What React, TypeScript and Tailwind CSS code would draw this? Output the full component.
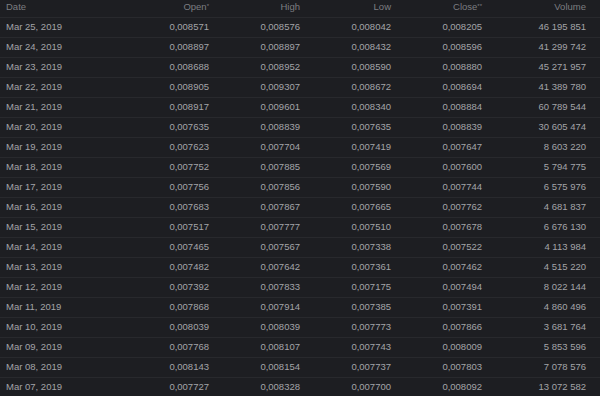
const rows: [string, string, string, string, string, string][] = [
  ["Mar 25, 2019", "0,008571", "0,008576", "0,008042", "0,008205", "46 195 851"],
  ["Mar 24, 2019", "0,008897", "0,008897", "0,008432", "0,008596", "41 299 742"],
  ["Mar 23, 2019", "0,008688", "0,008952", "0,008590", "0,008880", "45 271 957"],
  ["Mar 22, 2019", "0,008905", "0,009307", "0,008672", "0,008694", "41 389 780"],
  ["Mar 21, 2019", "0,008917", "0,009601", "0,008340", "0,008884", "60 789 544"],
  ["Mar 20, 2019", "0,007635", "0,008839", "0,007635", "0,008839", "30 605 474"],
  ["Mar 19, 2019", "0,007623", "0,007704", "0,007419", "0,007647", "8 603 220"],
  ["Mar 18, 2019", "0,007752", "0,007885", "0,007569", "0,007600", "5 794 775"],
  ["Mar 17, 2019", "0,007756", "0,007856", "0,007590", "0,007744", "6 575 976"],
  ["Mar 16, 2019", "0,007683", "0,007867", "0,007665", "0,007762", "4 681 837"],
  ["Mar 15, 2019", "0,007517", "0,007777", "0,007510", "0,007678", "6 676 130"],
  ["Mar 14, 2019", "0,007465", "0,007567", "0,007338", "0,007522", "4 113 984"],
  ["Mar 13, 2019", "0,007482", "0,007642", "0,007361", "0,007462", "4 515 220"],
  ["Mar 12, 2019", "0,007392", "0,007833", "0,007175", "0,007494", "8 022 144"],
  ["Mar 11, 2019", "0,007868", "0,007914", "0,007385", "0,007391", "4 860 496"],
  ["Mar 10, 2019", "0,008039", "0,008039", "0,007773", "0,007866", "3 681 764"],
  ["Mar 09, 2019", "0,007768", "0,008107", "0,007743", "0,008009", "5 853 596"],
  ["Mar 08, 2019", "0,008143", "0,008154", "0,007737", "0,007803", "7 078 576"],
  ["Mar 07, 2019", "0,007727", "0,008328", "0,007700", "0,008092", "13 072 582"],
];

const gridCols = "grid grid-cols-[112px_91px_91px_91px_91px_104px] items-center";

export default function App() {
  return (
    <div className="h-[396px] w-[600px] overflow-hidden bg-[#1d1e22] pl-[6px] font-['Liberation_Sans',Arial,sans-serif] text-[9.5px]">
      <div className={`${gridCols} h-[17px] pb-[2px] text-[#7c7d81]`}>
        <div>Date</div>
        <div className="text-right">
          Open<span className="relative -top-[2px] text-[6px]">*</span>
        </div>
        <div className="text-right">High</div>
        <div className="text-right">Low</div>
        <div className="text-right">
          Close<span className="relative -top-[2px] text-[6px]">**</span>
        </div>
        <div className="text-right">Volume</div>
      </div>
      {rows.map((r) => (
        <div
          key={r[0]}
          className={`${gridCols} -ml-[6px] h-[20px] border-t border-[#28292d] pl-[6px] text-[#a3a4a8]`}
        >
          <div>{r[0]}</div>
          <div className="text-right">{r[1]}</div>
          <div className="text-right">{r[2]}</div>
          <div className="text-right">{r[3]}</div>
          <div className="text-right">{r[4]}</div>
          <div className="text-right">{r[5]}</div>
        </div>
      ))}
    </div>
  );
}
